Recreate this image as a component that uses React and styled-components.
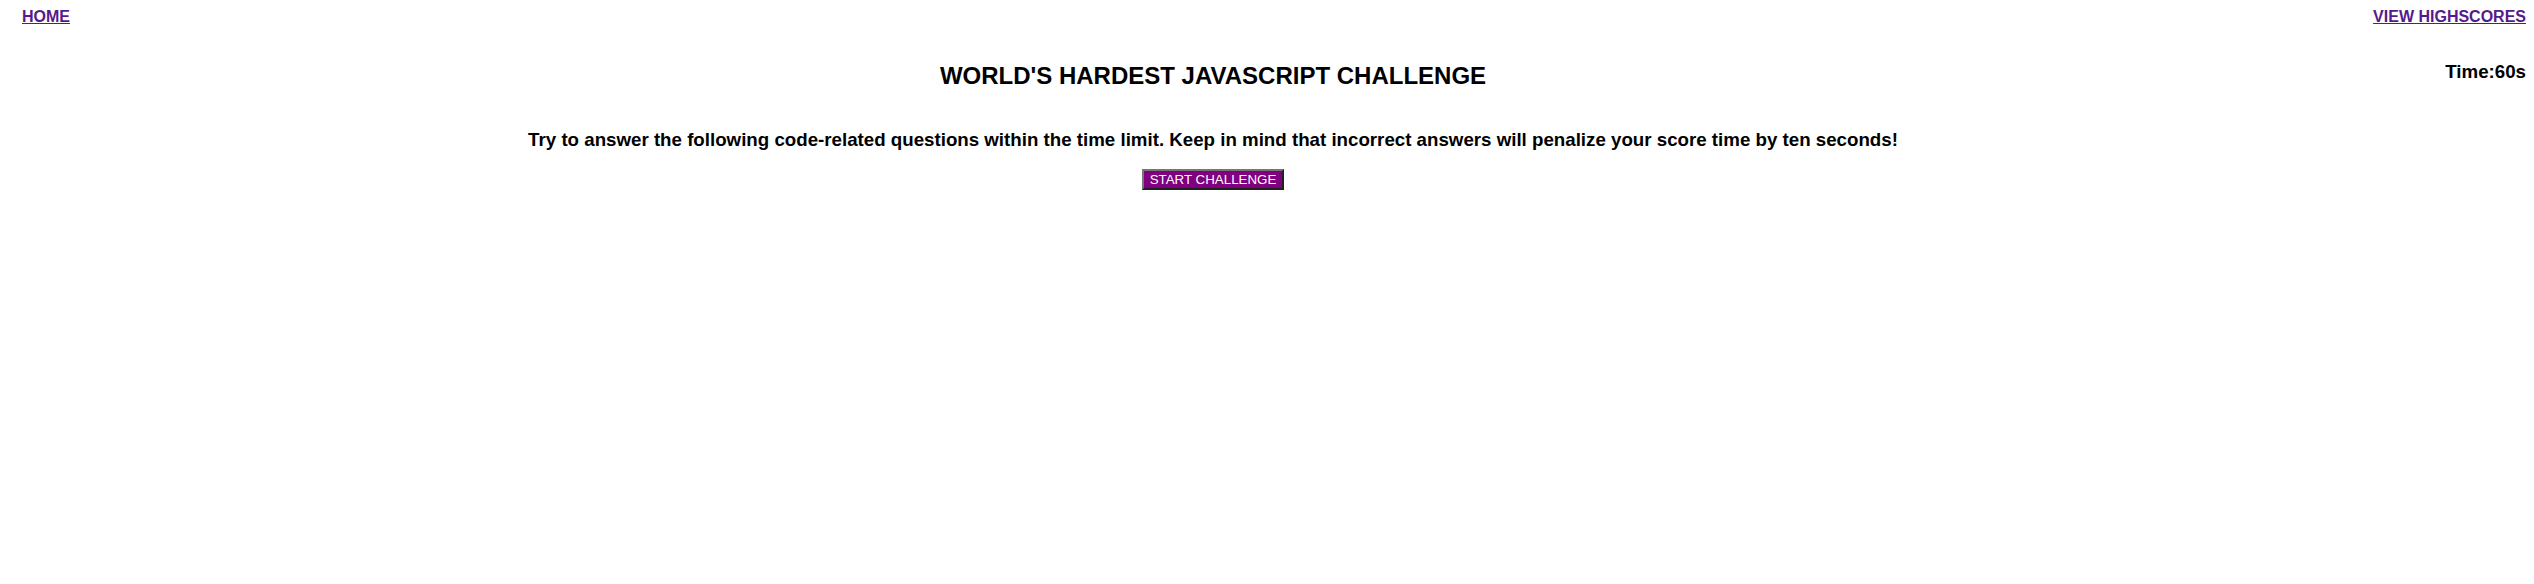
import styled, { createGlobalStyle } from "styled-components";

const GlobalStyle = createGlobalStyle`
  body {
    margin: 8px;
    font-family: "Liberation Sans", Arial, sans-serif;
    color: #000;
    background: #fff;
  }
`;

const Nav = styled.nav`
  display: flex;
  justify-content: space-between;
  align-items: flex-start;
  font-size: 16px;
  font-weight: bold;
`;

const NavLink = styled.a`
  color: #551a8b;
  text-decoration: underline;
  margin-left: ${props => props.$indent || 0}px;
  cursor: pointer;
`;

const Row = styled.div`
  display: flex;
  align-items: flex-start;
`;

const Main = styled.main`
  flex: 1;
  display: flex;
  flex-direction: column;
  align-items: center;
  text-align: center;
`;

const Title = styled.h2`
  font-size: 24px;
  font-weight: bold;
  margin: 36px 0 0;
`;

const Intro = styled.p`
  font-size: 18.72px;
  font-weight: bold;
  margin: 39px 0 0;
`;

const StartButton = styled.button`
  margin-top: 18px;
  font-family: "Liberation Sans", Arial, sans-serif;
  font-size: 13.33px;
  padding: 1px 6px;
  background: #800080;
  color: #fff;
  border: 2px outset #767676;
  cursor: pointer;
`;

const Timer = styled.h3`
  width: 108px;
  text-align: right;
  font-size: 18.72px;
  font-weight: bold;
  margin: 35px 0 0;
`;

const App = () => {
  return (
    <>
      <GlobalStyle />
      <Nav>
        <NavLink $indent={14}>HOME</NavLink>
        <NavLink>VIEW HIGHSCORES</NavLink>
      </Nav>
      <Row>
        <Main>
          <Title>WORLD'S HARDEST JAVASCRIPT CHALLENGE</Title>
          <Intro>
            Try to answer the following code-related questions within the time limit. Keep in mind that incorrect answers will penalize your score time by ten seconds!
          </Intro>
          <StartButton>START CHALLENGE</StartButton>
        </Main>
        <Timer>Time:60s</Timer>
      </Row>
    </>
  );
};

export default App;
